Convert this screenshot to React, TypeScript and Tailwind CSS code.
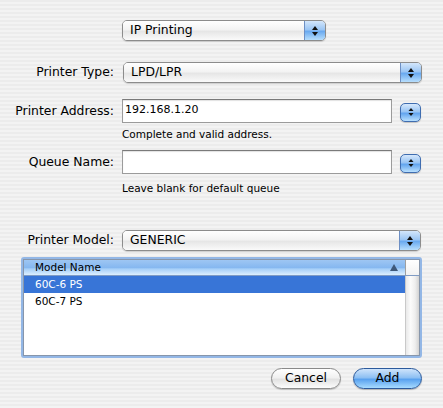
import type { ReactNode } from "react";

const FONT = "font-['DejaVu_Sans',_'Liberation_Sans',_sans-serif]";

function Arrows({ small = false }: { small?: boolean }) {
  return small ? (
    <svg width="6" height="10" viewBox="0 0 6 10" className="block">
      <path d="M3 1 L5.5 4 L0.5 4 Z" fill="#111" />
      <path d="M3 9 L5.5 6 L0.5 6 Z" fill="#111" />
    </svg>
  ) : (
    <svg width="8" height="12" viewBox="0 0 8 12" className="block">
      <path d="M4 1 L7 5 L1 5 Z" fill="#111" />
      <path d="M4 11 L7 7 L1 7 Z" fill="#111" />
    </svg>
  );
}

function Popup({ value, className }: { value: string; className: string }) {
  return (
    <div
      className={`flex overflow-hidden rounded-[5px] border border-[#8c8c8c] shadow-[0_1px_1px_rgba(0,0,0,0.15)] ${className}`}
    >
      <div className="flex flex-1 items-center bg-[linear-gradient(#ffffff,#f3f3f3_45%,#e6e6e6_55%,#fafafa)] pl-[7px] text-[12.4px] text-black">
        {value}
      </div>
      <div className="flex w-[21px] items-center justify-center border-l border-[#6d8fc4] bg-[linear-gradient(#d3e6fb,#9cc6f4_45%,#6aaaf0_55%,#b7defd)]">
        <Arrows />
      </div>
    </div>
  );
}

function Stepper() {
  return (
    <div className="flex h-[19px] w-[21px] items-center justify-center rounded-[5px] border border-[#3f6db0] bg-[linear-gradient(#d6e8fc,#98c4f4_45%,#63a5ef_55%,#b9e0fe)] shadow-[0_1px_1px_rgba(0,0,0,0.2)]">
      <Arrows small />
    </div>
  );
}

function Field({ value = "" }: { value?: string }) {
  return (
    <div className="flex h-[24px] w-[270px] items-start border border-[#9b9b9b] border-t-[#7a7a7a] bg-white pl-[2px] pt-[3px] text-[11px] leading-[13px] text-black shadow-[inset_0_1px_1px_rgba(0,0,0,0.12)]">
      {value}
    </div>
  );
}

function Row({ label, children, className = "" }: { label: string; children: ReactNode; className?: string }) {
  return (
    <div className={`flex items-center ${className}`}>
      <div className="w-[115px] shrink-0 pr-[1px] text-right text-[12.4px] text-black">{label}</div>
      <div className="ml-[7px] flex items-center">{children}</div>
    </div>
  );
}

export default function App() {
  return (
    <div
      className={`${FONT} h-[408px] w-[443px] overflow-hidden bg-[repeating-linear-gradient(#ececec_0px,#ececec_2px,#f3f3f3_2px,#f3f3f3_4px)] pt-[20px]`}
    >
      <div className="pl-[122px]">
        <Popup value="IP Printing" className="h-[21px] w-[204px]" />
      </div>

      <Row label="Printer Type:" className="mt-[21px]">
        <Popup value="LPD/LPR" className="ml-[1px] h-[21px] w-[299px]" />
      </Row>

      <Row label="Printer Address:" className="mt-[16px]">
        <Field value="192.168.1.20" />
        <div className="ml-[8px] mt-[2px]">
          <Stepper />
        </div>
      </Row>
      <div className="mt-[5px] pl-[122px] text-[10.5px] leading-[12px] text-black">Complete and valid address.</div>

      <Row label="Queue Name:" className="mt-[10px]">
        <Field />
        <div className="ml-[8px] mt-[2px]">
          <Stepper />
        </div>
      </Row>
      <div className="mt-[8px] pl-[122px] text-[10.5px] leading-[12px] text-black">Leave blank for default queue</div>

      <Row label="Printer Model:" className="mt-[36px]">
        <Popup value="GENERIC" className="h-[21px] w-[299px]" />
      </Row>

      {/* список моделей */}
      <div className="ml-[21px] mt-[6px] h-[101px] w-[401px] rounded-[3px] border-2 border-[#93b7e6]">
        <div className="flex h-full flex-col border border-[#8796ab] bg-white text-[10.5px]">
          <div className="flex h-[16px] shrink-0 border-b border-[#7f9bc4]">
            <div className="flex flex-1 items-center justify-between bg-[linear-gradient(#9ec6f3,#86b8f0_50%,#a6cff8_60%,#dcefff)] pl-[11px] pr-[7px] text-black">
              <span>Model Name</span>
              <svg width="8" height="7" viewBox="0 0 8 7">
                <path d="M4 0 L8 7 L0 7 Z" fill="#3e5879" />
              </svg>
            </div>
            <div className="w-[14px] border-l border-[#a0a0a0] bg-[linear-gradient(#ffffff,#f2f2f2)]" />
          </div>
          <div className="flex flex-1">
            <div className="flex-1">
              <div className="flex h-[17px] items-center bg-[#3875d7] pl-[11px] text-white">60C-6 PS</div>
              <div className="flex h-[17px] items-center pl-[11px] text-black">60C-7 PS</div>
            </div>
            <div className="w-[14px] border-l border-[#c9c9c9] bg-[linear-gradient(to_right,#e9e9e9,#fbfbfb_35%,#eeeeee_70%,#d2d2d2)]" />
          </div>
        </div>
      </div>

      <div className="mt-[10px] flex justify-end gap-[12px] pr-[21px]">
        <button className="flex h-[21px] w-[70px] items-center justify-center rounded-full border border-[#8a8a8a] bg-[linear-gradient(#ffffff,#f1f1f1_45%,#e2e2e2_55%,#fcfcfc)] text-[12.4px] text-black shadow-[0_1px_1px_rgba(0,0,0,0.2)]">
          Cancel
        </button>
        <button className="flex h-[21px] w-[69px] items-center justify-center rounded-full border border-[#2c5a9c] bg-[linear-gradient(#cfe4fb,#8ec0f3_45%,#5aa2ef_55%,#a7dbff)] text-[12.4px] text-black shadow-[0_1px_1px_rgba(0,0,0,0.25)]">
          Add
        </button>
      </div>
    </div>
  );
}
